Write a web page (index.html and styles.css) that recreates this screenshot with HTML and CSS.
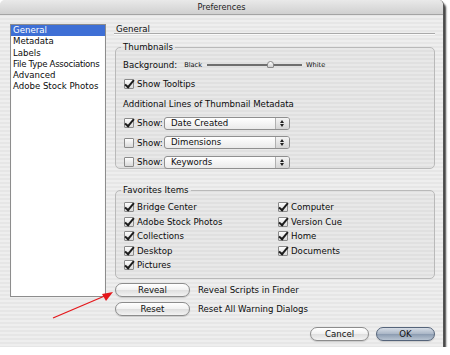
FILE: index.html
```html
<!DOCTYPE html>
<html lang="en">
<head>
    <meta charset="UTF-8">
    <meta name="viewport" content="width=device-width, initial-scale=1.0">
    <title>Preferences</title>
    <link rel="stylesheet" href="styles.css">
</head>
<body>

    <div class="window">
        <!-- Barra de título -->
        <div class="titlebar">Preferences</div>

        <div class="content">
            <!-- Lista de categorías -->
            <ul class="sidebar">
                <li class="selected">General</li>
                <li>Metadata</li>
                <li>Labels</li>
                <li class="tight">File Type Associations</li>
                <li>Advanced</li>
                <li>Adobe Stock Photos</li>
            </ul>

            <div class="main">
                <div class="section-title">General</div>

                <fieldset class="group thumbs">
                    <legend>Thumbnails</legend>
                    <div class="bg-row">
                        <span>Background:</span>
                        <span class="tiny black">Black</span>
                        <span class="slider"><span class="knob"></span></span>
                        <span class="tiny">White</span>
                    </div>
                    <div class="check tooltips"><span class="cb on"></span>Show Tooltips</div>
                    <div class="sub">Additional Lines of Thumbnail Metadata</div>
                    <div class="meta-row">
                        <span class="cb on"></span><span class="show">Show:</span>
                        <span class="popup">Date Created<span class="stepper"></span></span>
                    </div>
                    <div class="meta-row">
                        <span class="cb"></span><span class="show">Show:</span>
                        <span class="popup">Dimensions<span class="stepper"></span></span>
                    </div>
                    <div class="meta-row">
                        <span class="cb"></span><span class="show">Show:</span>
                        <span class="popup">Keywords<span class="stepper"></span></span>
                    </div>
                </fieldset>

                <fieldset class="group favs">
                    <legend>Favorites Items</legend>
                    <div class="fav-grid">
                        <div class="check"><span class="cb on"></span>Bridge Center</div>
                        <div class="check"><span class="cb on"></span>Computer</div>
                        <div class="check"><span class="cb on"></span>Adobe Stock Photos</div>
                        <div class="check"><span class="cb on"></span>Version Cue</div>
                        <div class="check"><span class="cb on"></span>Collections</div>
                        <div class="check"><span class="cb on"></span>Home</div>
                        <div class="check"><span class="cb on"></span>Desktop</div>
                        <div class="check"><span class="cb on"></span>Documents</div>
                        <div class="check"><span class="cb on"></span>Pictures</div>
                    </div>
                </fieldset>

                <div class="action-row reveal">
                    <button class="btn wide">Reveal</button>
                    <span>Reveal Scripts in Finder</span>
                </div>
                <div class="action-row">
                    <button class="btn wide">Reset</button>
                    <span>Reset All Warning Dialogs</span>
                </div>

                <div class="footer">
                    <button class="btn">Cancel</button>
                    <button class="btn default">OK</button>
                </div>
            </div>
        </div>

        <!-- Flecha roja de anotación -->
        <svg class="arrow" width="70" height="34" viewBox="0 0 70 34">
            <line x1="2" y1="31" x2="56" y2="8" stroke="#e4171b" stroke-width="1.3"/>
            <polygon points="62,5 51,7 55,14" fill="#e4171b"/>
        </svg>
    </div>

</body>
</html>
```

FILE: styles.css
```css
/* Estilos generales */
body {
    margin: 0;
    background-color: #ffffff;
    font-family: "DejaVu Sans", Verdana, sans-serif;
    font-size: 8.6px;
    color: #0c0c0c;
}
/* Ventana principal */
.window {
    position: relative;
    width: 443px;
    height: 347px;
    border-radius: 5px 5px 0 0;
    background: repeating-linear-gradient(#eeeeee 0 2px, #e6e6e6 2px 4px);
    box-shadow: 2px 3px 2px rgba(0, 0, 0, 0.75);
    border-right: 1px solid #555;
}
/* Barra de título */
.titlebar {
    height: 14px;
    line-height: 14px;
    text-align: center;
    font-size: 8.2px;
    color: #222;
    border-radius: 5px 5px 0 0;
    background: linear-gradient(#e9e9e9, #d0d0d0);
    border-bottom: 1px solid #a4a4a4;
}
/* Contenido */
.content {
    display: flex;
    gap: 8px;
    padding: 9px 8px 0 10px;
}
/* Lista lateral */
.sidebar {
    list-style: none;
    margin: 0;
    padding: 0;
    width: 94px;
    height: 271px;
    background-color: #fff;
    border: 1px solid #8d8d8d;
    box-shadow: inset 0 1px 1px rgba(0, 0, 0, 0.15);
}
.sidebar li {
    height: 11.3px;
    line-height: 11.3px;
    padding-left: 2px;
    white-space: nowrap;
}
.sidebar li.tight {
    letter-spacing: -0.3px;
}
.sidebar li.selected {
    background-color: #3e6fd5;
    color: #fff;
}
/* Columna principal */
.main {
    flex: 1;
    display: flex;
    flex-direction: column;
}
.section-title {
    height: 9px;
    line-height: 10px;
    padding-left: 2px;
    border-bottom: 1px solid #a9a9a9;
    box-shadow: 0 1px 0 #fafafa;
}
/* Cajas de grupo */
.group {
    margin: 8px 0 0 1px;
    padding: 0 0 0 7px;
    border: 1px solid #b9b9b9;
    border-radius: 5px;
    background-color: rgba(0, 0, 0, 0.025);
    min-width: 0;
}
.group legend {
    padding: 0 2px;
    margin-left: -2px;
    line-height: 11px;
}
.thumbs {
    height: 127px;
    box-sizing: border-box;
}
.favs {
    margin-top: 16px;
    height: 94px;
    box-sizing: border-box;
}
/* Fila del fondo */
.bg-row {
    display: flex;
    align-items: center;
    height: 13px;
    margin-top: 5px;
}
.tiny {
    font-size: 6.6px;
}
.tiny.black {
    margin-left: 7px;
}
.slider {
    position: relative;
    width: 95px;
    height: 2px;
    margin: 0 4px 0 5px;
    background-color: #6f6f6f;
}
.knob {
    position: absolute;
    left: 60px;
    top: -3px;
    width: 5px;
    height: 5px;
    border: 1px solid #8a8a8a;
    border-radius: 50% 50% 1px 1px;
    background: linear-gradient(#fff, #cfcfcf);
}
/* Casillas */
.check {
    display: flex;
    align-items: center;
    height: 13px;
}
.cb {
    position: relative;
    display: inline-block;
    box-sizing: border-box;
    width: 10px;
    height: 10px;
    margin: 0 3px 0 1px;
    border: 1px solid #8a8a8a;
    border-radius: 1px;
    background: linear-gradient(#fdfdfd, #d9d9d9);
    flex-shrink: 0;
}
.cb.on::after {
    content: "";
    position: absolute;
    left: 2px;
    top: -2px;
    width: 3px;
    height: 8px;
    border-right: 2px solid #1c1c1c;
    border-bottom: 2px solid #1c1c1c;
    transform: rotate(40deg);
}
.tooltips {
    margin-top: 6px;
}
.sub {
    height: 13px;
    line-height: 13px;
    margin-top: 8px;
}
/* Filas de metadatos */
.meta-row {
    display: flex;
    align-items: center;
    height: 15px;
    margin-top: 4.5px;
}
.meta-row:first-of-type {
    margin-top: 4px;
}
.show {
    width: 27px;
}
.popup {
    position: relative;
    box-sizing: border-box;
    width: 126px;
    height: 13px;
    line-height: 11px;
    padding-left: 6px;
    border: 1px solid #8f8f8f;
    border-radius: 3px;
    background: linear-gradient(#ffffff, #eaeaea);
}
.stepper {
    position: absolute;
    right: 0;
    top: 0;
    width: 13px;
    height: 11px;
    border-left: 1px solid #b0b0b0;
    border-radius: 0 2px 2px 0;
    background: linear-gradient(#f4f4f4, #d4d4d4);
}
.stepper::before,
.stepper::after {
    content: "";
    position: absolute;
    left: 4px;
    border-left: 2.5px solid transparent;
    border-right: 2.5px solid transparent;
}
.stepper::before {
    top: 2px;
    border-bottom: 3px solid #222;
}
.stepper::after {
    top: 6px;
    border-top: 3px solid #222;
}
/* Favoritos */
.fav-grid {
    display: grid;
    grid-template-columns: 154px 1fr;
    grid-auto-rows: 14.5px;
    margin-top: 4px;
}
.fav-grid .check {
    height: 14.5px;
}
/* Botones */
.btn {
    box-sizing: border-box;
    width: 59px;
    height: 14px;
    padding: 0;
    font-family: inherit;
    font-size: 8.6px;
    color: #111;
    border: 1px solid #8c8c8c;
    border-radius: 7px;
    background: linear-gradient(#ffffff, #f1f1f1 50%, #dedede 51%, #f3f3f3);
    box-shadow: 0 1px 1px rgba(0, 0, 0, 0.15);
}
.btn.wide {
    width: 75px;
}
.btn.default {
    border-color: #55647a;
    background: linear-gradient(#d6dde6, #a9b6c6 50%, #8b9bb0 51%, #b8c4d2);
}
.action-row {
    display: flex;
    align-items: center;
    gap: 8px;
    height: 14px;
    margin: 5px 0 0 1px;
}
.action-row.reveal {
    margin-top: 4px;
}
.footer {
    display: flex;
    justify-content: flex-end;
    gap: 7px;
    margin-top: 11px;
}
/* Flecha de anotación */
.arrow {
    position: absolute;
    left: 51px;
    top: 287px;
}
```
